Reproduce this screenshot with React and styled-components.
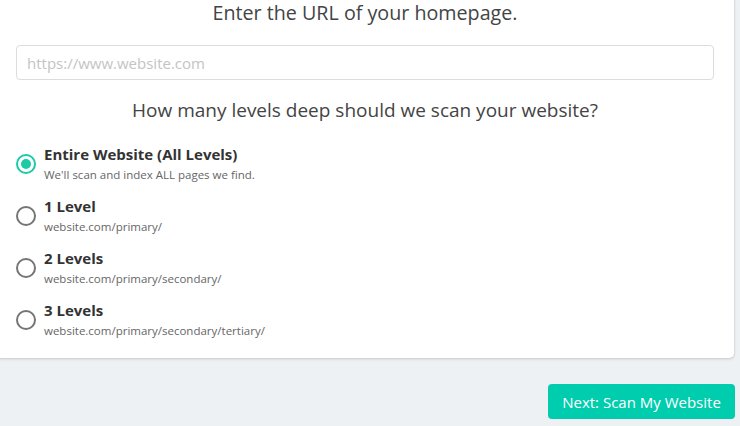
import React, { useState } from 'react';
import styled, { createGlobalStyle } from 'styled-components';

const GlobalStyle = createGlobalStyle`
  html, body {
    margin: 0;
    padding: 0;
    background: #eef1f4;
    font-family: "Open Sans", "Noto Sans", sans-serif;
  }
`;

const Page = styled.div`
  display: flex;
  flex-direction: column;
  align-items: flex-end;
  width: 740px;
  height: 426px;
  overflow: hidden;
`;

const Card = styled.div`
  box-sizing: border-box;
  width: 735px;
  margin-right: 5px;
  background: #fff;
  border-right: 1px solid #d9dcdf;
  border-bottom: 1px solid #d2d5d8;
  border-radius: 0 0 6px 0;
  box-shadow: 0 1px 2px rgba(0, 0, 0, 0.08);
  padding: 0 20px 19px 16px;
  display: flex;
  flex-direction: column;
`;

const Heading = styled.h2`
  margin: 0;
  font-size: ${(p) => p.$size || 19}px;
  line-height: 26px;
  font-weight: 400;
  color: #444;
  text-align: center;
`;

const UrlInput = styled.input`
  box-sizing: border-box;
  width: 698px;
  height: 35px;
  margin-top: 19px;
  padding: 0 10px;
  border: 1px solid #dcdcdc;
  border-radius: 4px;
  font-family: inherit;
  font-size: 15px;
  color: #444;
  &::placeholder {
    color: #c4c4c4;
  }
`;

const Question = styled(Heading)`
  margin-top: 17px;
`;

const Options = styled.div`
  display: flex;
  flex-direction: column;
  gap: 13px;
  margin-top: 21px;
`;

const Option = styled.label`
  display: flex;
  align-items: center;
  gap: 8px;
  cursor: pointer;
`;

const Radio = styled.span`
  box-sizing: border-box;
  flex: none;
  width: 20px;
  height: 20px;
  border-radius: 50%;
  border: 2px solid ${(p) => (p.$checked ? '#1ccaa6' : '#757575')};
  display: flex;
  align-items: center;
  justify-content: center;
  &::after {
    content: '';
    width: 10px;
    height: 10px;
    border-radius: 50%;
    background: #1ccaa6;
    display: ${(p) => (p.$checked ? 'block' : 'none')};
  }
`;

const OptionText = styled.div`
  display: flex;
  flex-direction: column;
`;

const OptionTitle = styled.div`
  font-size: 15px;
  line-height: 20px;
  font-weight: 700;
  color: #333;
`;

const OptionSub = styled.div`
  margin-top: 3px;
  font-size: 11.5px;
  line-height: 16px;
  color: #666;
`;

const NextButton = styled.button`
  margin: 25px 5px 0 0;
  width: 187px;
  height: 35px;
  border: none;
  border-radius: 4px;
  background: #00cdae;
  color: #fff;
  font-family: inherit;
  font-size: 15px;
  cursor: pointer;
`;

const levels = [
  { title: 'Entire Website (All Levels)', sub: "We'll scan and index ALL pages we find." },
  { title: '1 Level', sub: 'website.com/primary/' },
  { title: '2 Levels', sub: 'website.com/primary/secondary/' },
  { title: '3 Levels', sub: 'website.com/primary/secondary/tertiary/' },
];

export default function App() {
  const [level, setLevel] = useState(0);
  return (
    <>
      <GlobalStyle />
      <Page>
        <Card>
          <Heading $size={19.7}>Enter the URL of your homepage.</Heading>
          <UrlInput placeholder="https://www.website.com" />
          <Question>How many levels deep should we scan your website?</Question>
          <Options>
            {levels.map((l, i) => (
              <Option key={l.title} onClick={() => setLevel(i)}>
                <Radio $checked={level === i} />
                <OptionText>
                  <OptionTitle>{l.title}</OptionTitle>
                  <OptionSub>{l.sub}</OptionSub>
                </OptionText>
              </Option>
            ))}
          </Options>
        </Card>
        <NextButton>Next: Scan My Website</NextButton>
      </Page>
    </>
  );
}
